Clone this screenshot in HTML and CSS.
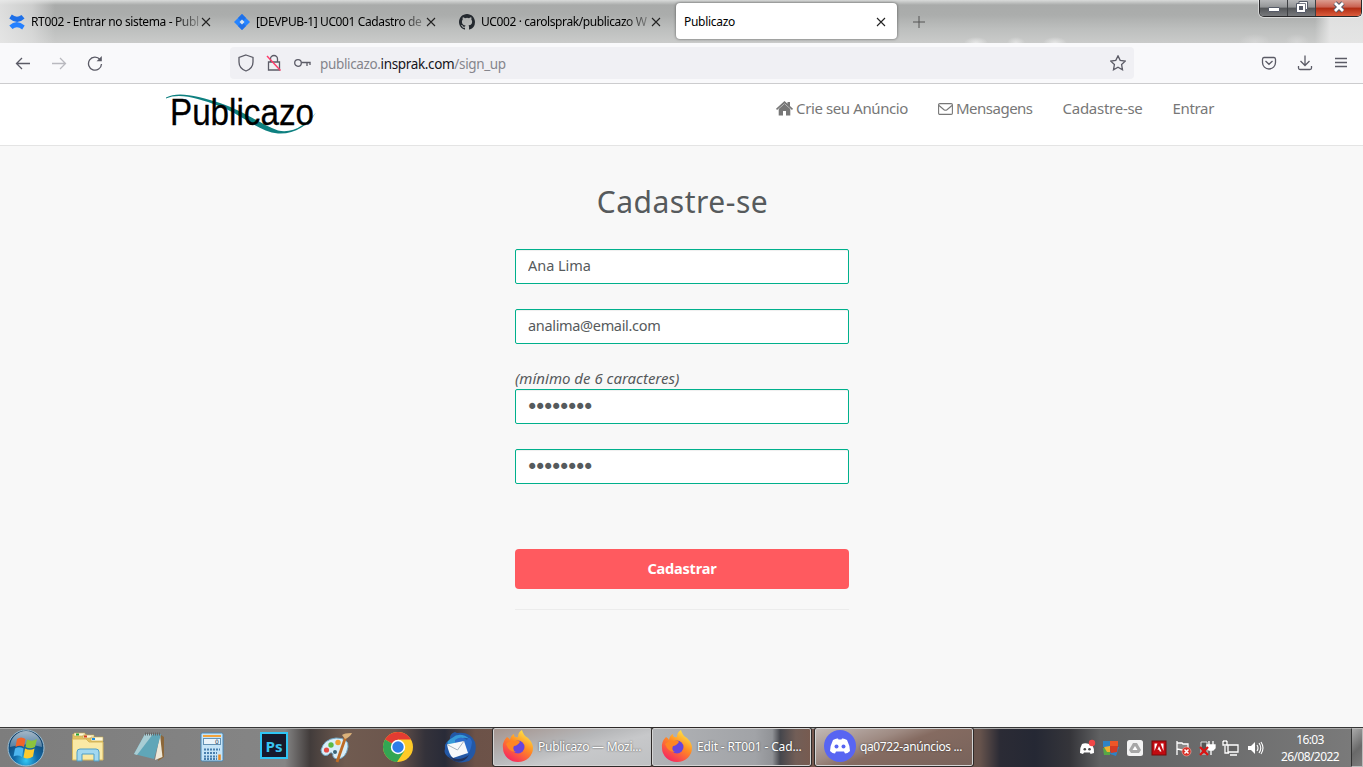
FILE: index.html
```html
<!DOCTYPE html>
<html lang="pt-BR">
<head>
<meta charset="utf-8">
<title>Publicazo</title>
<link rel="stylesheet" href="styles.css">
</head>
<body>
<div class="tabs">
  <div class="tab">
    <svg class="fav" viewBox="0 0 16 16"><path d="M.3 4.500 2.800.5Q7.500 4.500 12.500 1L15.500 4.500Q8.500 11.500 .3 4.500Z" fill="#1d6fe8"/><path d="M.3 11.500Q7.500 4.500 15.700 11.500L13.200 15.500Q8 11.500 3.500 15Z" fill="#2580ff"/></svg>
    <span class="tab-title t1">RT002 - Entrar no sistema - Publ</span>
    <svg class="close" viewBox="0 0 10 10"><path d="M1 1 9 9M9 1 1 9"/></svg>
  </div>
  <div class="tab">
    <svg class="fav" viewBox="0 0 16 16"><path d="M8 0 16 8 8 16 0 8Z" fill="#2684ff"/><path d="M8 0 4 4 8 8 12 4ZM8 8 4 12 8 16 12 12Z" fill="#1f70e8"/><path d="M8 5.500 10.500 8 8 10.500 5.500 8Z" fill="#d8e4f0"/></svg>
    <span class="tab-title t2">[DEVPUB-1] UC001 Cadastro de</span>
    <svg class="close" viewBox="0 0 10 10"><path d="M1 1 9 9M9 1 1 9"/></svg>
  </div>
  <div class="tab">
    <svg class="fav" viewBox="0 0 16 16"><path fill="#24292f" d="M8 0C3.580 0 0 3.580 0 8c0 3.540 2.290 6.530 5.470 7.590.4.070.55-.17.55-.38v-1.490c-2.010.37-2.530-.49-2.690-.94-.09-.23-.48-.94-.82-1.130-.28-.15-.68-.52-.01-.53.630-.01 1.080.58 1.230.82.720 1.210 1.870.87 2.330.66.070-.52.280-.87.510-1.070-1.780-.2-3.640-.89-3.640-3.950 0-.87.310-1.590.82-2.150-.08-.2-.36-1.020.08-2.120 0 0 .67-.21 2.200.82a7.600 7.600 0 0 1 4 0c1.530-1.040 2.200-.82 2.200-.82.440 1.100.16 1.920.08 2.120.510.56.82 1.270.82 2.150 0 3.070-1.870 3.750-3.650 3.950.29.25.54.73.54 1.480v2.200c0 .21.150.46.550.38A8 8 0 0 0 16 8c0-4.420-3.580-8-8-8Z"/></svg>
    <span class="tab-title t3">UC002 · carolsprak/publicazo W</span>
    <svg class="close" viewBox="0 0 10 10"><path d="M1 1 9 9M9 1 1 9"/></svg>
  </div>
  <div class="tab active">
    <span class="tab-title t4">Publicazo</span>
    <svg class="close" viewBox="0 0 10 10"><path d="M1 1 9 9M9 1 1 9"/></svg>
  </div>
  <svg class="plus" viewBox="0 0 12 12"><path d="M6 0V12M0 6H12"/></svg>
  <div class="winctl">
    <div class="wc"><svg width="14" height="14" viewBox="0 0 14 14"><rect x="1.500" y="7.500" width="11" height="4" rx=".5" fill="#fff" stroke="#555a68"/></svg></div>
    <div class="wc"><svg width="14" height="14" viewBox="0 0 14 14"><path d="M4 1.500H12.500V9.500H10.500V12.500H1.500V3.500H4Z" fill="#fff" stroke="#555a68"/><rect x="4.500" y="6.500" width="3" height="3" fill="#555a68" stroke="#555a68"/><path d="M4 3.500H10.500V9.500" fill="none" stroke="#555a68" stroke-width=".8"/></svg></div>
    <div class="wc x"><svg width="14" height="14" viewBox="0 0 14 14"><path d="M3 3 11 11M11 3 3 11" stroke="#555a68" stroke-width="4.600"/><path d="M3 3 11 11M11 3 3 11" stroke="#fff" stroke-width="2.800"/></svg></div>
  </div>
</div>
<div class="toolbar">
  <div class="navbtns">
    <svg width="16" height="16" viewBox="0 0 16 16"><path d="M15 8.500H1.500M7 3 1.500 8.500 7 14"/></svg>
    <svg class="dim" width="16" height="16" viewBox="0 0 16 16"><path d="M1 8.500H14.500M9 3 14.500 8.500 9 14"/></svg>
    <svg width="16" height="16" viewBox="0 0 16 16"><path d="M13 4.500A6.500 6.500 0 1 0 14.500 9"/><path d="M14.800 1V6.200H9.600Z" class="tip"/></svg>
  </div>
  <div class="url">
    <svg width="16" height="18" viewBox="0 0 16 18"><path d="M8 1 15 3.500V8C15 12 12 15.500 8 17 4 15.500 1 12 1 8V3.500Z"/></svg>
    <svg width="16" height="18" viewBox="0 0 16 18"><path d="M4.500 8V5A3.500 3.500 0 0 1 11.500 5V8M2.500 8H13.500V16H2.500Z"/><path class="red" d="M1 2 14.500 16.500"/></svg>
    <svg width="18" height="12" viewBox="0 0 18 12"><circle cx="4" cy="6" r="3.300"/><path d="M7.500 5.500H16.700M13 5.500V9M16 5.500V8"/></svg>
    <span class="addr">publicazo.<b>insprak.com</b>/sign_up</span>
    <svg class="star" width="16" height="16" viewBox="0 0 16 16"><path d="M8 .9 10.200 5.400 15.200 6.100 11.600 9.600 12.500 14.800 8 12.300 3.500 14.800 4.400 9.600 .8 6.100 5.800 5.400Z"/></svg>
  </div>
  <div class="tools">
    <svg width="16" height="16" viewBox="0 0 16 16"><path d="M3 2.500H13A1.800 1.800 0 0 1 14.500 4.200V7.500A6.500 6.500 0 0 1 1.500 7.500V4.200A1.800 1.800 0 0 1 3 2.500ZM4.500 6 8 9.300 11.500 6"/></svg>
    <svg width="16" height="16" viewBox="0 0 16 16"><path d="M8 .5V10.500M3.500 6 8 10.500 12.500 6M1.500 11V13Q1.500 14.500 3 14.500H13Q14.500 14.500 14.500 13V11"/></svg>
    <svg width="14" height="16" viewBox="0 0 14 16"><path d="M1 3.500H13M1 7.500H13M1 11.500H13"/></svg>
  </div>
</div>
<header class="site">
  <svg class="logo" width="150" height="42" viewBox="0 0 150 42"><path d="M0 4.500C12-2 32 3 54 10C80 19 94 31 112 37.500C127 41 141 31 150 19.500C142 33 128 41.500 112 40.500C92 38 78 23 53 13C32 5 13-.5 0 5.500Z" fill="#0e8080"/><text x="4" y="32" textLength="144" lengthAdjust="spacingAndGlyphs">Publicazo</text></svg>
  <nav>
    <a><svg width="17" height="15" viewBox="0 0 17 15"><path fill="#777" d="M8.500 0 11.500 2.700V1H14V5L17 7.700 16 8.900 8.500 2.500 1 8.900 0 7.700Z"/><path fill="#777" d="M8.500 2.800 14.300 8V14.500H10V10H7V14.500H2.700V8Z"/></svg><span class="n1">Crie seu Anúncio</span></a>
    <a><svg width="15" height="13" viewBox="0 0 15 13"><rect x=".6" y="1.600" width="13.800" height="10.800" rx="1.200" fill="none" stroke="#777" stroke-width="1.100"/><path d="M1 3.500 6 7.700Q7.500 8.900 9 7.700L14 3.500" fill="none" stroke="#777" stroke-width="1.100"/></svg><span class="n2">Mensagens</span></a>
    <a><span class="n3">Cadastre-se</span></a>
    <a><span class="n4">Entrar</span></a>
  </nav>
</header>
<main>
  <h1><span>Cadastre-se</span></h1>
  <form>
    <input type="text" class="i1" value="Ana Lima">
    <input type="text" class="i2" value="analima@email.com">
    <label><em>(mínimo de 6 caracteres)</em></label>
    <input type="password" class="pw" value="12345678">
    <input type="password" class="pw" value="12345678">
    <button type="button"><span>Cadastrar</span></button>
    <hr>
  </form>
</main>
<footer class="taskbar">
  <div class="launch">
    <svg width="38" height="38" viewBox="0 0 38 38"><defs><radialGradient id="orb" cx=".5" cy=".85" r=".8"><stop offset="0" stop-color="#35c8f5"/><stop offset=".4" stop-color="#126aa8"/><stop offset="1" stop-color="#123a5e"/></radialGradient><linearGradient id="gl" x2="0" y2="1"><stop stop-color="#e3edf4"/><stop offset="1" stop-color="#7094b0"/></linearGradient></defs><circle cx="19" cy="19" r="18" fill="url(#orb)" stroke="#9cc0d6"/><path d="M3 18A16 16 0 0 1 35 18Q19 13 3 18Z" fill="url(#gl)" opacity=".7"/><path d="M10 10Q14 7 18.500 10L17 18Q13 15.500 8.500 18Z" fill="#f0652a"/><path d="M20 10.500Q25 13 30 10L28 18Q23 20.500 18.500 18Z" fill="#8cc43e"/><path d="M8 19.500Q12 17 16.500 19.500L15 28Q11 25.500 6.500 27.500Z" fill="#4db5ee"/><path d="M18 19.500Q23 22 27.500 19.500L26 27.500Q21 31 16.500 28.500Z" fill="#fdca2e"/></svg>
    <svg width="34" height="34" viewBox="0 0 34 34"><path d="M1.500 4H15L17 7H32V30H1.500Z" fill="#e3c25e"/><path d="M1.500 9H15L18 12H32V30H1.500Z" fill="#fae9a5" stroke="#d6b65c"/><path d="M3 3H14V6H3ZM12 5H23V8H12ZM20 7H32V11H20Z" fill="#fff8d8" stroke="#c2a851" stroke-width=".6"/><path d="M5 3.500H8V5.500H5Z" fill="#20a333"/><path d="M13 5.500H16V7.500H13Z" fill="#d84122"/><path d="M21 8H24V10H21Z" fill="#208ee0"/><path d="M6 31V22Q6 19 9 19H25Q28 19 28 22V31H23V24H11V31Z" fill="#a2d8f0" stroke="#4e9ec6"/></svg>
    <svg width="34" height="34" viewBox="0 0 34 34"><path d="M28 5 31 7 31 27 25 31Z" fill="#8b673a"/><path d="M27 5 29.500 27 22 30Z" fill="#eee8d8"/><path d="M12 4H28L21 29 1 24Z" fill="#60a6b8"/><path d="M12 4H20L4 25 1 24Z" fill="#a9cdd4"/><path d="M12 4H28" stroke="#666" stroke-width="3" stroke-dasharray="1 1"/></svg>
    <svg width="34" height="34" viewBox="0 0 34 34"><rect x="6" y="3" width="22" height="28" rx="1.500" fill="#c5e4f7" stroke="#4888b8"/><path d="M8 5H26V7H8Z" fill="#f1a33c"/><rect x="8.500" y="8.500" width="17" height="6" fill="#e9f3fa" stroke="#6392b5"/><text x="20" y="14" font-size="6" fill="#235" font-family="DejaVu Sans">0</text><path d="M9 19.500H25M9 23H22M9 26.500H22M9 29H22" stroke="#487fae" stroke-width="2" stroke-dasharray="2 1"/><path d="M24.500 24.500V30" stroke="#e88b24" stroke-width="2.500"/></svg>
    <svg width="34" height="34" viewBox="0 0 34 34"><rect x="4" y="3" width="26" height="25" fill="#171a2c" stroke="#2fc5f5" stroke-width="2"/><text x="8.500" y="22" class="ps" textLength="17" lengthAdjust="spacingAndGlyphs">Ps</text></svg>
    <svg width="34" height="34" viewBox="0 0 34 34"><path d="M2 20Q5 9 17 8Q30 8 29 17Q27 29 18 29Q13 28 14 24Q12 21 9 25Q3 27 2 20Z" fill="#d8edf8" stroke="#71a8c7"/><circle cx="7.500" cy="20" r="2.600" fill="#e44a43"/><circle cx="12" cy="15" r="2.700" fill="#5cba43"/><circle cx="19" cy="12.500" r="2.700" fill="#f0a12f"/><circle cx="16" cy="22" r="2" fill="#3a6578"/><path d="M27 6 18 32" stroke="#bd6b25" stroke-width="2.800"/><path d="M23 5Q25 3 33 3Q31 7 26 9Z" fill="#dbb27b"/></svg>
    <svg width="34" height="34" viewBox="0 0 34 34"><circle cx="17" cy="17" r="15" fill="#ffca27"/><path d="M17 17 4 9.500A15 15 0 0 1 30 9.500H17Z" fill="#e43c32"/><path d="M4 9.500A15 15 0 0 0 16 32L23.500 20.700 17 17Z" fill="#33a653"/><circle cx="17" cy="17" r="7.200" fill="#fff"/><circle cx="17" cy="17" r="5.700" fill="#2d7de9"/></svg>
    <svg width="34" height="34" viewBox="0 0 34 34"><path d="M7 10Q6 4 12 2L14 3Q27 1 32 12Q35 24 26 31Q15 35 7 28Q0 24 2 19Q1 12 7 10Z" fill="#2358a6"/><path d="M9 8Q17 1 27 9Q16 5 14 14L5 15Q3 11 9 8Z" fill="#369bd8"/><path d="M12 10Q18 5 24 10 27 5 29 12 28 21 24 25L21 13 12 13Z" fill="#2c6dca"/><path d="M4 14.500 21 11 25 23 10 28Q6 25 4 14.500Z" fill="#f6f8fa"/><path d="M4 14.500 14.500 20 21 11" fill="none" stroke="#a8b2bd"/><path d="M5 25Q15 33 26 25Q21 34 11 31Z" fill="#22335d"/></svg>
  </div>
  <div class="task first">
    <svg class="ff" viewBox="0 0 32 32"><defs><linearGradient id="fx" x1=".8" x2=".2" y2="1"><stop stop-color="#fff14a"/><stop offset=".45" stop-color="#ff8a24"/><stop offset="1" stop-color="#f51d65"/></linearGradient></defs><path d="M5 7Q7 8 8 10Q9 5 12 4Q12 8 16 7Q16 2 20 0Q21 5 26 8Q31 13 31 18A15 14 0 0 1 1 18Q0 12 5 7Z" fill="url(#fx)"/><circle cx="16" cy="17" r="6.500" fill="#6845dc"/><path d="M4 14Q8 10 13 11Q16 9 18 12Q15 16 12 16Q10 20 14 22Q9 22 6 18Z" fill="#ff8524"/></svg>
    <span class="k1">Publicazo — Mozi...</span>
  </div>
  <div class="task second">
    <svg class="ff" viewBox="0 0 32 32"><path d="M5 7Q7 8 8 10Q9 5 12 4Q12 8 16 7Q16 2 20 0Q21 5 26 8Q31 13 31 18A15 14 0 0 1 1 18Q0 12 5 7Z" fill="url(#fx)"/><circle cx="16" cy="17" r="6.500" fill="#6845dc"/><path d="M4 14Q8 10 13 11Q16 9 18 12Q15 16 12 16Q10 20 14 22Q9 22 6 18Z" fill="#ff8524"/></svg>
    <span class="k2">Edit - RT001 - Cad...</span>
  </div>
  <div class="task third">
    <svg class="ff" viewBox="0 0 32 32"><circle cx="16" cy="16" r="16" fill="#5865f2"/><path d="M9 10Q12 8 14 8.500L14.500 9.500H17.500L18 8.500Q20 8 23 10Q26 16 26 21Q23.500 23.500 21 23.500L20 21.500H12L11 23.500Q8.500 23.500 6 21Q6 16 9 10Z" fill="#fff"/><circle cx="12.500" cy="16.500" r="2" fill="#5865f2"/><circle cx="19.500" cy="16.500" r="2" fill="#5865f2"/></svg>
    <span class="k3">qa0722-anúncios ...</span>
  </div>
  <div class="tray">
    <svg viewBox="0 0 18 18"><path d="M4 5Q7 3.500 11 5L14 5Q16.500 10 16 14L12.500 15 12 13.500H6L5 15 2 14Q1.500 9 4 5Z" fill="#fff"/><circle cx="6.800" cy="10.300" r="1.300" fill="#444"/><circle cx="11.500" cy="10.300" r="1.300" fill="#444"/><circle cx="14" cy="4" r="3.200" fill="#f04747"/></svg>
    <svg viewBox="0 0 18 18"><path d="M1 2H8V8H1Z" fill="#2d83c5"/><path d="M8 2H16V8H8Z" fill="#ef5627"/><path d="M1 9H8V16H2Z" fill="#58a746"/><path d="M10 8H17L14 17 8 15Z" fill="#2d83c5"/><path d="M7 7 16 7 15 13 9 14Z" fill="#d43b24"/><path d="M2 8 8 7 8 13 5 13Z" fill="#efb02d"/></svg>
    <svg viewBox="0 0 18 18"><rect x="1" y="1" width="16" height="16" rx="2.500" fill="#f3f3f3"/><path d="M7 4H11L15 11 13 14H5L3 11Z" fill="#a7a7a7"/><path d="M9 7 11.500 11H6.500Z" fill="#fff"/></svg>
    <svg viewBox="0 0 18 18"><rect x="2" y="2" width="14" height="14" fill="#c30b11" stroke="#780a0b"/><path d="M4.500 4.500H7.500L4.500 12ZM10.500 4.500H13.500V12ZM9 7 11.500 12.500H9.800L9 10.800H7.500Z" fill="#fff"/></svg>
    <svg viewBox="0 0 18 18"><path d="M3 2V16M3 4H8L9 5H14V11H8L3 10Z" fill="#888" stroke="#fff" stroke-width="1.300"/><circle cx="12.500" cy="12.500" r="4.500" fill="#d83027" stroke="#f4b2aa" stroke-width=".6"/><path d="M10.500 10.500 14.500 14.500M14.500 10.500 10.500 14.500" stroke="#fff" stroke-width="1.500"/></svg>
    <svg viewBox="0 0 18 18"><path d="M3 3H9V15H3Z" fill="#555" stroke="#ddd"/><path d="M11 2V6M15 2V6M9 6H17V9L15 11H11L9 9ZM13 11V16" fill="#fff" stroke="#fff" stroke-width="1.300"/><path d="M2 8 10 16M10 8 2 16" stroke="#dc1313" stroke-width="2.300"/></svg>
    <svg viewBox="0 0 18 18"><path d="M6 6H16V13H6ZM8 16H15M3 7V14H7M1 2V6H5V2M2 1V3M4 1V3" fill="#626262" stroke="#fff" stroke-width="1.300"/></svg>
    <svg viewBox="0 0 18 18"><path d="M2 7H5L9 3V15L5 11H2Z" fill="#fff"/><path d="M11 6Q13 9 11 12M13 4Q16.500 9 13 14M15 3Q19 9 15 15" fill="none" stroke="#fff" stroke-width="1.100"/></svg>
  </div>
  <div class="clock"><span class="c1">16:03</span><span class="c2">26/08/2022</span></div>
  <div class="desk"></div>
</footer>
</body>
</html>
```

FILE: styles.css
```css
* { box-sizing: border-box; }
body { margin: 0; width: 1363px; height: 767px; overflow: hidden; display: flex; flex-direction: column; background: #f8f8f8; font-family: "Noto Sans", "Open Sans", sans-serif; }
span { white-space: nowrap; }
svg { flex: none; display: block; }

.tabs { height: 43px; flex: none; display: flex; background: linear-gradient(90deg, #ebebebcc 0, #e4e4e499 32px, #dddddd00 55px, #fff0 1315px, #ebebebcc 1330px), radial-gradient(ellipse 12px 6px at 976px 43px, #eeec, #fff0), radial-gradient(ellipse 9px 6px at 1016px 43px, #eeea, #fff0), radial-gradient(ellipse 12px 6px at 1055px 43px, #eeec, #fff0), radial-gradient(ellipse 16px 8px at 1255px 42px, #ddd9, #fff0), radial-gradient(ellipse 12px 8px at 1297px 42px, #ddd9, #fff0), linear-gradient(#d9dbda 0, #a9abaa 5px, #abadac 15px, #bdbfbe 29px, #cacbca 43px); }
.tab { width: 225px; height: 43px; padding: 0 14px 0 9px; display: flex; align-items: center; font-size: 12px; letter-spacing: -.4px; }
.fav { width: 16px; height: 16px; margin-right: 6px; }
.tab-title { flex: 1; min-width: 0; overflow: hidden; color: #000; line-height: 20px; -webkit-mask-image: linear-gradient(90deg, #000 84%, #0003 100%); }
.t1 { letter-spacing: -.37px; }
.t2 { letter-spacing: -.38px; }
.t4 { -webkit-mask-image: none; letter-spacing: -.3px; }
.tab .close { width: 10px; height: 10px; }
.close path { stroke: #222; stroke-width: 1.100; fill: none; }
.tab.active { width: 221px; height: 36px; margin: 3px 3px 0 1px; padding: 1px 11px 0 8px; background: #fff; border-radius: 4px; box-shadow: 0 0 3px #0008; }
.plus { width: 12px; height: 12px; margin: 16px 0 0 13px; }
.plus path { stroke: #555; fill: none; }
.winctl { margin-left: auto; margin-right: 1px; height: 17px; width: 103px; display: flex; border: 1px solid #29292b; border-top: 0; border-radius: 0 0 5px 5px; overflow: hidden; box-shadow: 0 0 0 1px #ffffff80; }
.wc { width: 28px; display: flex; justify-content: center; background: linear-gradient(#b6b7b9, #929496 45%, #535558 50%, #77797c); border-right: 1px solid #3e4043; }
.wc.x { flex: 1; border: 0; background: linear-gradient(#dc9c8f, #c9604f 45%, #b02b12 50%, #dc5d3d); }

.toolbar { height: 41px; flex: none; display: flex; background: #f9f9fb; border-bottom: 1px solid #ccccce; align-items: center; }
.toolbar svg path, .toolbar svg circle { fill: none; stroke: #5b5b66; stroke-width: 1.300; }
.toolbar svg .tip { fill: #5b5b66; stroke: none; }
.toolbar svg .red { stroke: #ff3b6b; stroke-width: 1.400; }
.navbtns { width: 230px; padding-left: 15px; display: flex; gap: 20px; }
.navbtns .dim { opacity: .4; }
.url { width: 904px; height: 32px; border-radius: 4px; background: #f0f0f4; padding: 0 8px; display: flex; align-items: center; gap: 12px; }
.addr { flex: 1; font-size: 13.500px; letter-spacing: -.35px; color: #85858c; margin: 1px 0 0 -4px; }
.addr b { font-weight: 400; color: #15141a; }
.tools { display: flex; gap: 20px; margin-left: 127px; }
.tools svg:last-child { margin-left: 1px; }

.site { height: 62px; flex: none; background: #fff; border-bottom: 1px solid #e4e4e4; padding: 9px 149px 0 166px; display: flex; justify-content: space-between; }
.logo { overflow: visible; }
.logo text { font: 37px "Liberation Sans", sans-serif; fill: #000; stroke: #000; stroke-width: .3px; }
nav { display: flex; gap: 30px; height: 30px; align-items: center; font-size: 15px; color: #777; }
nav a { display: flex; align-items: center; gap: 3px; }
.n1 { letter-spacing: -.4px; }
.n2 { letter-spacing: -.5px; }
.n3 { letter-spacing: -.27px; }
.n4 { letter-spacing: -.35px; }

main { flex: 1; display: flex; flex-direction: column; align-items: center; color: #565a5c; }
h1 { margin: 34px 0 0 2px; height: 44px; line-height: 44px; font-size: 30px; letter-spacing: .5px; font-weight: 400; font-family: "Noto Sans", sans-serif; }
form { width: 334px; margin: 25px 0 0 1px; display: flex; flex-direction: column; }
input { height: 35px; width: 334px; border: 1px solid #00b08c; border-radius: 2px; background: #fff; box-shadow: inset 0 1px 1px #0001; padding: 0 12px 3px; margin: 0 0 25px; font: 14.500px "Noto Sans", sans-serif; letter-spacing: -.33px; color: #565a5c; outline: 0; }
.i1 { letter-spacing: -.05px; }
label { height: 20px; line-height: 19px; font-size: 15px; white-space: nowrap; }
.pw { font: 21px "DejaVu Sans", sans-serif; letter-spacing: -4.400px; padding: 0 10px; }
button { height: 40px; margin: 40px 0 20px; padding: 0 0 2px; border: 0; border-radius: 4px; background: #ff5a5f; color: #fff; font: bold 14.500px "Noto Sans", sans-serif; letter-spacing: -.2px; }
hr { width: 334px; margin: 0; border: 0; border-top: 1px solid #ececec; }

.taskbar { height: 40px; flex: none; display: flex; color: #fff; font-size: 12px; border-top: 1px solid #373737; box-shadow: inset 0 1px #aaa; background: linear-gradient(90deg, #7d7d7d 0, #858585 285px, #423c3b 310px, #705b50 345px, #6c564d 395px, #34323a 425px, #292b38 445px, #6c5248 475px, #76584e 650px, #76584e 945px, #66534c 980px, #2b2b35 1000px, #252834 1035px, #35353a 1070px, #606162 1100px, #7b7b7b 1363px); }
.launch { width: 493px; display: flex; }
.launch svg { width: 34px; height: 34px; margin: 2px 14px; }
.launch svg:first-child { width: 38px; height: 38px; margin: 1px 12px 0 7px; }
.ps { font: bold 15px "Open Sans", sans-serif; fill: #39c4f2; }
.task { width: 159px; height: 38px; border: 1px solid #d4d4d4; outline: 1px solid #2e2a29; border-radius: 2px; display: flex; align-items: center; padding: 0 0 2px 8px; gap: 4px; letter-spacing: -.27px; text-shadow: 0 0 2px #333; }
.ff { width: 32px; height: 32px; }
.k2 { letter-spacing: -.15px; }
.k3 { letter-spacing: -.37px; }
.first { background: linear-gradient(165deg, #a5948e, #b5b6b8 40%, #c7c8ca 60%, #bfc1c3); }
.second { background: linear-gradient(90deg, #b1b3b6 0, #a1a3a7 65%, #919397 76%, #45464c 81%, #725e57 91%, #775b50); }
.third { width: 158px; margin-left: 4px; background: linear-gradient(160deg, #c2b9b5, #9e8a82 35%, #856b61 50%, #78635b); }
.tray { margin-left: auto; width: 192px; display: flex; align-items: center; }
.tray svg { width: 18px; height: 18px; margin: 1px 3px 0; }
.clock { width: 84px; display: flex; flex-direction: column; align-items: center; padding: 3px 0 0 2px; line-height: 17px; letter-spacing: -.6px; }
.desk { width: 12px; border: 1px solid #bbb; border-left-color: #333; background: linear-gradient(135deg, #aaa, #696969 55%, #7c7c7c); }
```
